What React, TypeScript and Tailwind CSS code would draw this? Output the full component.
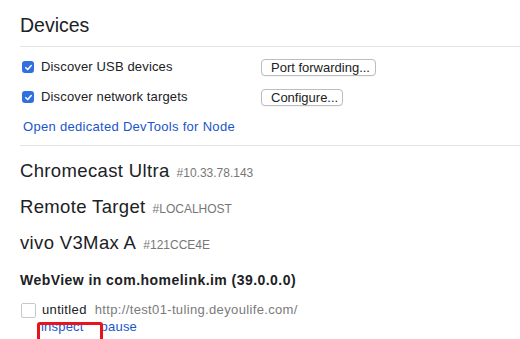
import React from "react";

const Check = () => (
  <div className="w-[12px] h-[12px] rounded-[3px] bg-[#2f6fdf] flex items-center justify-center shrink-0">
    <svg width="9" height="9" viewBox="0 0 10 10" fill="none">
      <path d="M2 5.2 L4.1 7.3 L8 2.8" stroke="white" strokeWidth="1.7" strokeLinecap="round" strokeLinejoin="round" />
    </svg>
  </div>
);

const Btn = ({ label, w }: { label: string; w: string }) => (
  <button
    className={`${w} h-[17px] rounded-[4px] border border-[#bdbdbd] bg-white text-[13px] leading-[15px] text-[#222] text-left pl-[9px] shadow-[0_0.5px_0.5px_rgba(0,0,0,0.08)]`}
  >
    {label}
  </button>
);

const devices = [
  { name: "Chromecast Ultra", id: "#10.33.78.143" },
  { name: "Remote Target", id: "#LOCALHOST" },
  { name: "vivo V3Max A", id: "#121CCE4E" },
];

export default function App() {
  return (
    <div
      className="w-[520px] h-[339px] overflow-hidden bg-white text-[#202124] pl-[20px]"
      style={{ fontFamily: '"Liberation Sans", Arial, sans-serif' }}
    >
      <div className="h-[46px] flex items-center pt-[4px] text-[19.5px] leading-[24px]">Devices</div>
      <div className="border-t border-[#e3e3e3] pt-[5px] pb-[3px]">
        <div className="h-[30px] flex items-center">
          <div className="w-[241px] flex items-center gap-[7px] pl-[2px] text-[13px] tracking-[0.15px]">
            <Check />
            <span>Discover USB devices</span>
          </div>
          <Btn label="Port forwarding..." w="w-[115px]" />
        </div>
        <div className="h-[30px] flex items-center">
          <div className="w-[241px] flex items-center gap-[7px] pl-[2px] text-[13px] tracking-[0.15px]">
            <Check />
            <span>Discover network targets</span>
          </div>
          <Btn label="Configure..." w="w-[82px]" />
        </div>
        <div className="h-[30px] flex items-center pl-[3px] pb-[1px] text-[13px] tracking-[0.3px] text-[#1a55cc]">
          Open dedicated DevTools for Node
        </div>
      </div>
      <div className="border-t border-[#e3e3e3] pt-[7px]">
        {devices.map((d) => (
          <div key={d.id} className="h-[36px] flex items-center gap-[7px]">
            <span className="text-[18.5px] tracking-[0.35px]">{d.name}</span>
            <span className="text-[12px] text-[#777] pt-[3px]">{d.id}</span>
          </div>
        ))}
        <div className="h-[39px] flex items-center text-[14px] font-bold tracking-[0.45px]">
          WebView in com.homelink.im (39.0.0.0)
        </div>
        <div className="h-[20px] flex items-center gap-[6px] text-[13px] tracking-[0.35px]">
          <div className="w-[15px] h-[15px] ml-[1px] border border-[#c8c8c8] rounded-[2px] bg-white" />
          <span>untitled</span>
          <span className="text-[#7a7a7a] ml-[2px]">http://test01-tuling.deyoulife.com/</span>
        </div>
        <div className="relative h-[14px] flex items-center gap-[17px] pl-[21px] text-[13px] tracking-[0.2px] text-[#1a55cc]">
          <span>inspect</span>
          <span>pause</span>
          <div className="absolute left-[17px] top-[2px] w-[66px] h-[30px] border-[3px] border-[#e8141c] rounded-[3px]" />
        </div>
      </div>
    </div>
  );
}
